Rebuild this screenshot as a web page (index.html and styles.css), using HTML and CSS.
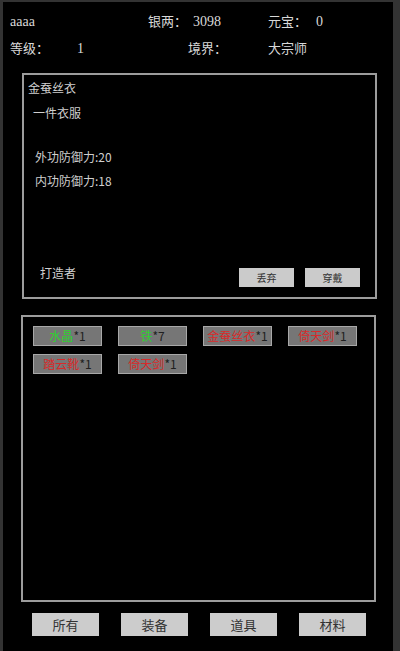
FILE: index.html
```html
<!DOCTYPE html>
<html lang="zh">
<head>
<meta charset="utf-8">
<link rel="stylesheet" href="styles.css">
</head>
<body>
<div class="screen">
  <div class="hdr">
    <span class="c1 lat">aaaa</span><span class="c2">银两：</span><span class="c3 lat">3098</span><span class="c4">元宝：</span><span class="lat">0</span>
  </div>
  <div class="hdr">
    <span class="d1">等级：</span><span class="d2 lat">1</span><span class="d3">境界：</span><span>大宗师</span>
  </div>

  <div class="panel detail">
    <div class="name">金蚕丝衣</div>
    <div class="desc">一件衣服</div>
    <div class="stat first">外功防御力:20</div>
    <div class="stat">内功防御力:18</div>
    <div class="foot">
      <span class="maker">打造者</span>
      <div class="acts">
        <button class="act">丢弃</button>
        <button class="act">穿戴</button>
      </div>
    </div>
  </div>

  <div class="panel bag">
    <div class="grid">
      <div class="item"><span class="g">水晶</span>*1</div>
      <div class="item"><span class="g">铁</span>*7</div>
      <div class="item"><span class="r">金蚕丝衣</span>*1</div>
      <div class="item"><span class="r">倚天剑</span>*1</div>
      <div class="item"><span class="r">踏云靴</span>*1</div>
      <div class="item"><span class="r">倚天剑</span>*1</div>
    </div>
  </div>

  <div class="tabs">
    <button class="tab">所有</button>
    <button class="tab">装备</button>
    <button class="tab">道具</button>
    <button class="tab">材料</button>
  </div>
</div>
</body>
</html>
```
FILE: styles.css
```css
html, body {
  margin: 0;
  padding: 0;
  background: #333333;
}
body {
  width: 400px;
  height: 651px;
  overflow: hidden;
}
.screen {
  margin: 2px 7px 0 3px;
  height: 649px;
  background: #000;
  padding-top: 6px;
  box-sizing: border-box;
  font-family: "Noto Sans CJK SC", "Noto Sans", sans-serif;
}
.hdr {
  display: flex;
  padding-left: 7px;
  height: 27px;
  line-height: 27px;
  font-family: "Liberation Serif", "Noto Sans CJK SC", serif;
  font-size: 13px;
  color: #d8d8d8;
  white-space: nowrap;
}
.lat { font-size: 14px; }
.c1 { width: 138px; }
.c2 { width: 45px; }
.c3 { width: 75px; }
.c4 { width: 48px; }
.d1 { width: 67px; }
.d2 { width: 111px; }
.d3 { width: 80px; }

.panel {
  margin-left: 19px;
  width: 355px;
  box-sizing: border-box;
  border: 2px solid #9c9c9c;
}
.detail {
  margin-top: 11px;
  height: 226px;
  display: flex;
  flex-direction: column;
  padding: 5px 15px 10px 4px;
  color: #cfcfcf;
  font-size: 12px;
  line-height: 16px;
}
.desc { margin: 9px 0 0 5px; }
.stat { margin-left: 7px; }
.stat.first { margin-top: 28px; }
.stat + .stat { margin-top: 8px; }
.foot {
  margin-top: auto;
  display: flex;
  justify-content: space-between;
  align-items: flex-end;
}
.maker { margin-left: 12px; padding-bottom: 6px; }
.acts { display: flex; gap: 11px; }
.act {
  width: 55px;
  height: 19px;
  padding: 0;
  border: none;
  background: #cbcbcb;
  color: #333;
  font-family: inherit;
  font-size: 10px;
  line-height: 19px;
}
.bag {
  margin-top: 16px;
  margin-left: 18px;
  height: 287px;
  padding: 9px 10px;
}
.grid {
  display: grid;
  grid-template-columns: repeat(4, 69px);
  column-gap: 16px;
  row-gap: 8px;
}
.item {
  height: 20px;
  box-sizing: border-box;
  border: 1px solid #a8a8a8;
  background: #767676;
  color: #202020;
  font-size: 12px;
  line-height: 18px;
  text-align: center;
  white-space: nowrap;
}
.g { color: #2fd12f; }
.r { color: #d82a2a; }
.tabs {
  display: flex;
  gap: 22px;
  padding-left: 29px;
  margin-top: 11px;
}
.tab {
  width: 67px;
  height: 23px;
  padding: 0;
  border: none;
  background: #cccccc;
  color: #333;
  font-family: inherit;
  font-size: 13px;
  line-height: 23px;
}
```
